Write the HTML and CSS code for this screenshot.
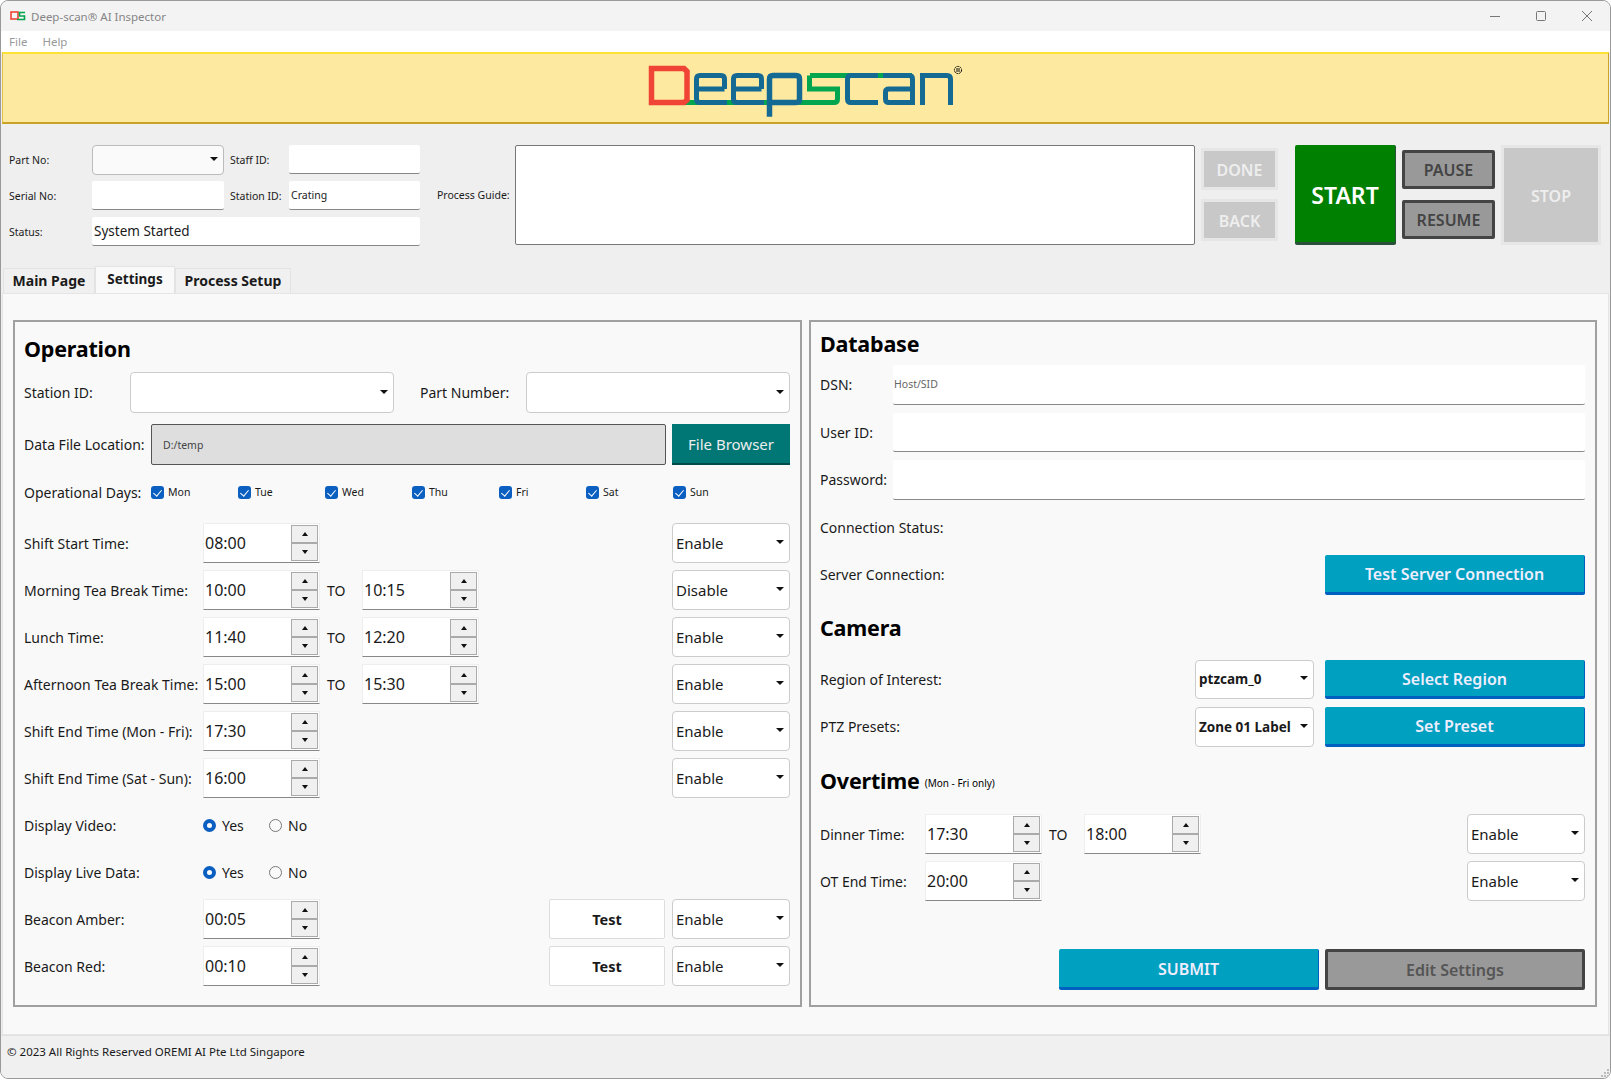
FILE: index.html
```html
<!DOCTYPE html>
<html lang="en">
<head>
    <meta charset="UTF-8">
    <title>Deep-scan AI Inspector</title>
    <link rel="stylesheet" href="styles.css">
</head>
<body>
<div class="window">

    <!-- Title bar -->
    <div class="titlebar">
        <svg class="app-icon" width="16" height="10" viewBox="0 0 16 10">
            <rect x="1" y="1" width="7" height="7" fill="none" stroke="#f04437" stroke-width="1.6"/>
            <path d="M15 1.5H9.5V5H14.5V8.5H7" fill="none" stroke="#04a54f" stroke-width="1.6"/>
        </svg>
        <span class="title-text">Deep-scan® AI Inspector</span>
        <div class="win-controls">
            <svg width="12" height="12" viewBox="0 0 12 12"><path d="M1 6.5H11" stroke="#777" fill="none"/></svg>
            <svg width="12" height="12" viewBox="0 0 12 12"><rect x="1.5" y="1.5" width="9" height="9" rx="1" stroke="#777" fill="none"/></svg>
            <svg width="12" height="12" viewBox="0 0 12 12"><path d="M1 1L11 11M11 1L1 11" stroke="#777" fill="none"/></svg>
        </div>
    </div>

    <!-- Menu -->
    <div class="menubar">
        <span>File</span>
        <span>Help</span>
    </div>

    <!-- Logo banner -->
    <div class="banner">
        <svg class="logo" width="330" height="60" viewBox="0 0 330 60" role="img" aria-label="Deepscan logo">
            <g fill="none" stroke="#04a54f" stroke-width="5">
                <path d="M44 42.5H150"/>
                <path d="M272 15.5H170"/>
                <path d="M169.5 15.5V29H197.5V39Q197.5 42.5 194 42.5H150"/>
            </g>
            <g fill="none" stroke="#156a93" stroke-width="5">
                <path d="M84.5 29V19Q84.5 15.5 81 15.5H60Q56.5 15.5 56.5 19V39Q56.5 42.5 60 42.5H87M56.5 29H84.5"/>
                <path d="M121.5 29V19Q121.5 15.5 118 15.5H97Q93.5 15.5 93.5 19V39Q93.5 42.5 97 42.5H124M93.5 29H121.5"/>
                <path d="M129.5 56.7V19Q129.5 15.5 133 15.5H156Q159.5 15.5 159.5 19V39Q159.5 42.5 156 42.5H129.5" stroke-width="5.5"/>
                <path d="M238 15.5H211Q207.5 15.5 207.5 19V39Q207.5 42.5 211 42.5H238"/>
                <path d="M243 15.5H269Q272.5 15.5 272.5 19V45M272.5 29H249Q245.5 29 245.5 32V39Q245.5 42.5 249 42.5H272.5"/>
                <path d="M282.5 45V15.5H307Q310.5 15.5 310.5 19V45"/>
            </g>
            <path d="M11.5 8.5H44L47 11.5V40L44 42.5H11.5Z" fill="none" stroke="#f04437" stroke-width="5.5"/>
            <circle cx="318" cy="10" r="3.6" fill="none" stroke="#111" stroke-dasharray="2 0.6"/>
            <path d="M317 8V12M319 8V12" stroke="#111"/>
        </svg>
    </div>

    <!-- Top form and big buttons -->
    <div class="topbar">
        <div class="top-form">
            <label>Part No:</label>
            <div class="combo top-combo"><i class="arrow"></i></div>
            <label class="mid-label">Staff ID:</label>
            <div class="line-input"></div>
            <label>Serial No:</label>
            <div class="line-input"></div>
            <label class="mid-label">Station ID:</label>
            <div class="line-input">Crating</div>
            <label>Status:</label>
            <div class="line-input status-input">System Started</div>
        </div>
        <label class="guide-label">Process Guide:</label>
        <div class="guide-box"></div>
        <div class="stack done-stack">
            <button class="btn-disabled">DONE</button>
            <button class="btn-disabled">BACK</button>
        </div>
        <button class="btn-start">START</button>
        <div class="stack pause-stack">
            <button class="btn-dark">PAUSE</button>
            <button class="btn-dark">RESUME</button>
        </div>
        <button class="btn-disabled btn-stop">STOP</button>
    </div>

    <!-- Tabs -->
    <div class="tabs">
        <div class="tab tab-main">Main Page</div>
        <div class="tab tab-active">Settings</div>
        <div class="tab tab-setup">Process Setup</div>
    </div>

    <div class="pane">

        <!-- Operation -->
        <section class="panel">
            <h2 class="op-title">Operation</h2>
            <div class="row row-41">
                <span class="lbl w106">Station ID:</span>
                <div class="combo w264"><i class="arrow"></i></div>
                <span class="lbl w106 part-lbl">Part Number:</span>
                <div class="combo w264"><i class="arrow"></i></div>
            </div>
            <div class="row row-41 data-row">
                <span class="lbl w127">Data File Location:</span>
                <div class="path-field">D:/temp</div>
                <button class="btn-teal">File Browser</button>
            </div>
            <div class="row days-row">
                <span class="lbl w127">Operational Days:</span>
                <span class="day"><i class="check"></i>Mon</span>
                <span class="day"><i class="check"></i>Tue</span>
                <span class="day"><i class="check"></i>Wed</span>
                <span class="day"><i class="check"></i>Thu</span>
                <span class="day"><i class="check"></i>Fri</span>
                <span class="day"><i class="check"></i>Sat</span>
                <span class="day"><i class="check"></i>Sun</span>
            </div>

            <div class="row">
                <span class="lbl w179">Shift Start Time:</span>
                <div class="spin"><span>08:00</span><div class="spin-btns"><b><i class="up"></i></b><b><i class="arrow"></i></b></div></div>
                <div class="combo enable">Enable<i class="arrow"></i></div>
            </div>
            <div class="row">
                <span class="lbl w179">Morning Tea Break Time:</span>
                <div class="spin"><span>10:00</span><div class="spin-btns"><b><i class="up"></i></b><b><i class="arrow"></i></b></div></div>
                <span class="to">TO</span>
                <div class="spin"><span>10:15</span><div class="spin-btns"><b><i class="up"></i></b><b><i class="arrow"></i></b></div></div>
                <div class="combo enable">Disable<i class="arrow"></i></div>
            </div>
            <div class="row">
                <span class="lbl w179">Lunch Time:</span>
                <div class="spin"><span>11:40</span><div class="spin-btns"><b><i class="up"></i></b><b><i class="arrow"></i></b></div></div>
                <span class="to">TO</span>
                <div class="spin"><span>12:20</span><div class="spin-btns"><b><i class="up"></i></b><b><i class="arrow"></i></b></div></div>
                <div class="combo enable">Enable<i class="arrow"></i></div>
            </div>
            <div class="row">
                <span class="lbl w179">Afternoon Tea Break Time:</span>
                <div class="spin"><span>15:00</span><div class="spin-btns"><b><i class="up"></i></b><b><i class="arrow"></i></b></div></div>
                <span class="to">TO</span>
                <div class="spin"><span>15:30</span><div class="spin-btns"><b><i class="up"></i></b><b><i class="arrow"></i></b></div></div>
                <div class="combo enable">Enable<i class="arrow"></i></div>
            </div>
            <div class="row">
                <span class="lbl w179">Shift End Time (Mon - Fri):</span>
                <div class="spin"><span>17:30</span><div class="spin-btns"><b><i class="up"></i></b><b><i class="arrow"></i></b></div></div>
                <div class="combo enable">Enable<i class="arrow"></i></div>
            </div>
            <div class="row">
                <span class="lbl w179">Shift End Time (Sat - Sun):</span>
                <div class="spin"><span>16:00</span><div class="spin-btns"><b><i class="up"></i></b><b><i class="arrow"></i></b></div></div>
                <div class="combo enable">Enable<i class="arrow"></i></div>
            </div>
            <div class="row">
                <span class="lbl w179">Display Video:</span>
                <span class="radio radio-on">Yes</span>
                <span class="radio">No</span>
            </div>
            <div class="row">
                <span class="lbl w179">Display Live Data:</span>
                <span class="radio radio-on">Yes</span>
                <span class="radio">No</span>
            </div>
            <div class="row">
                <span class="lbl w179">Beacon Amber:</span>
                <div class="spin"><span>00:05</span><div class="spin-btns"><b><i class="up"></i></b><b><i class="arrow"></i></b></div></div>
                <button class="btn-test">Test</button>
                <div class="combo enable after-test">Enable<i class="arrow"></i></div>
            </div>
            <div class="row">
                <span class="lbl w179">Beacon Red:</span>
                <div class="spin"><span>00:10</span><div class="spin-btns"><b><i class="up"></i></b><b><i class="arrow"></i></b></div></div>
                <button class="btn-test">Test</button>
                <div class="combo enable after-test">Enable<i class="arrow"></i></div>
            </div>
        </section>

        <!-- Database, Camera, Overtime -->
        <section class="panel">
            <h2 class="db-title">Database</h2>
            <div class="row row-db">
                <span class="lbl w73">DSN:</span>
                <div class="line-input db-input hint">Host/SID</div>
            </div>
            <div class="row row-db">
                <span class="lbl w73">User ID:</span>
                <div class="line-input db-input"></div>
            </div>
            <div class="row row-db">
                <span class="lbl w73">Password:</span>
                <div class="line-input db-input"></div>
            </div>
            <div class="row row-db">
                <span class="lbl">Connection Status:</span>
            </div>
            <div class="row row-db">
                <span class="lbl">Server Connection:</span>
                <button class="btn-blue">Test Server Connection</button>
            </div>

            <h2 class="cam-title">Camera</h2>
            <div class="row row-db">
                <span class="lbl">Region of Interest:</span>
                <div class="combo cam-combo">ptzcam_0<i class="arrow"></i></div>
                <button class="btn-blue btn-near">Select Region</button>
            </div>
            <div class="row row-db">
                <span class="lbl">PTZ Presets:</span>
                <div class="combo cam-combo">Zone 01 Label<i class="arrow"></i></div>
                <button class="btn-blue btn-near">Set Preset</button>
            </div>

            <h2 class="ot-title">Overtime <small>(Mon - Fri only)</small></h2>
            <div class="row">
                <span class="lbl w105">Dinner Time:</span>
                <div class="spin"><span>17:30</span><div class="spin-btns"><b><i class="up"></i></b><b><i class="arrow"></i></b></div></div>
                <span class="to">TO</span>
                <div class="spin"><span>18:00</span><div class="spin-btns"><b><i class="up"></i></b><b><i class="arrow"></i></b></div></div>
                <div class="combo enable">Enable<i class="arrow"></i></div>
            </div>
            <div class="row">
                <span class="lbl w105">OT End Time:</span>
                <div class="spin"><span>20:00</span><div class="spin-btns"><b><i class="up"></i></b><b><i class="arrow"></i></b></div></div>
                <div class="combo enable">Enable<i class="arrow"></i></div>
            </div>

            <div class="submit-row">
                <button class="btn-blue">SUBMIT</button>
                <button class="btn-edit">Edit Settings</button>
            </div>
        </section>
    </div>

    <!-- Status bar -->
    <div class="statusbar">
        <span>© 2023 All Rights Reserved OREMI AI Pte Ltd Singapore</span>
        <svg class="grip" width="8" height="8" viewBox="0 0 8 8">
            <path d="M6 0h2v2H6zM3 3h2v2H3zM6 3h2v2H6zM0 6h2v2H0zM3 6h2v2H3zM6 6h2v2H6z" fill="#bbb"/>
        </svg>
    </div>
</div>
</body>
</html>
```

FILE: styles.css
```css
*, *::before, *::after {
    box-sizing: border-box;
}
body {
    margin: 0;
    height: 1080px;
    overflow: hidden;
    background-color: #fff;
    font-family: "Noto Sans", Arial, sans-serif;
    color: #1a1a1a;
}
button {
    font-family: inherit;
    padding: 0;
    cursor: pointer;
}
.window {
    height: 1079px;
    background-color: #efefef;
    border: 1px solid #999;
    border-radius: 8px;
    overflow: hidden;
    display: flex;
    flex-direction: column;
}

/* Title bar and menu */
.titlebar {
    height: 30px;
    flex: none;
    background-color: #f3f3f3;
    display: flex;
    align-items: center;
    padding-left: 9px;
}
.app-icon {
    margin-right: 5px;
}
.title-text {
    font-size: 11.5px;
    color: #858585;
}
.win-controls {
    margin-left: auto;
    display: flex;
    gap: 34px;
    padding-right: 17px;
}
.menubar {
    height: 21px;
    flex: none;
    background-color: #fff;
    display: flex;
    align-items: center;
    gap: 15px;
    padding-left: 8px;
    font-size: 11.5px;
    color: #999;
}
.banner {
    height: 72px;
    flex: none;
    margin: 0 1px;
    background-color: #fde9a0;
    border-top: 2px solid #ffe135;
    border-bottom: 2px solid #c9a227;
    border-left: 1px solid #e2c04a;
    border-right: 1px solid #c9a227;
    display: flex;
    justify-content: center;
}
.logo {
    margin: 6px 0 0 -2px;
    display: block;
}

/* Top form */
.topbar {
    height: 142px;
    flex: none;
    padding: 21px 0 0 8px;
    display: flex;
    align-items: flex-start;
}
.top-form {
    display: grid;
    grid-template-columns: 83px 132px 65px 131px;
    grid-auto-rows: 29px;
    row-gap: 7px;
    align-items: center;
    font-size: 10.5px;
}
.mid-label {
    padding-left: 6px;
}
.top-form .status-input {
    grid-column: 2 / 5;
    font-size: 13.5px;
}
.line-input {
    height: 100%;
    background-color: #fff;
    border-bottom: 1px solid #888;
    border-radius: 2px;
    display: flex;
    align-items: center;
    padding-left: 2px;
}
.guide-label {
    width: 71px;
    margin: 0 7px 0 17px;
    padding-top: 43px;
    font-size: 10.5px;
    white-space: nowrap;
}
.guide-box {
    width: 680px;
    height: 100px;
    background-color: #fff;
    border: 1px solid #777;
    border-radius: 2px;
}
.stack {
    height: 100px;
    display: flex;
    flex-direction: column;
    justify-content: space-between;
}
.done-stack {
    width: 77px;
    margin-left: 6px;
    padding: 3px 0 4px;
}
.done-stack button {
    height: 42px;
    padding-top: 2px;
}
.pause-stack {
    width: 93px;
    margin-left: 6px;
    padding: 5px 0 6px;
}
.pause-stack button {
    height: 39px;
}
.btn-disabled {
    background-color: #c8c8c8;
    border: 3px solid #e6e6e6;
    color: #eee;
    font-size: 16px;
    font-weight: 600;
}
.btn-start {
    width: 101px;
    height: 100px;
    margin-left: 17px;
    padding-top: 3px;
    background-color: #008000;
    border: none;
    border-bottom: 3px solid #2a4f3a;
    border-right: 1px solid #2a4f3a;
    border-radius: 2px;
    color: #fff;
    font-size: 23px;
    font-weight: 600;
}
.btn-dark {
    background-color: #999;
    border: 3px solid #444;
    border-radius: 2px;
    color: #444;
    font-size: 16px;
    font-weight: 600;
}
.btn-stop {
    width: 100px;
    height: 100px;
    margin-left: 6px;
    padding-top: 2px;
}

/* Tabs */
.tabs {
    height: 27px;
    flex: none;
    padding-left: 2px;
    display: flex;
    align-items: flex-end;
    font-size: 14px;
    font-weight: 700;
}
.tab {
    height: 25px;
    padding-bottom: 1px;
    display: flex;
    align-items: center;
    justify-content: center;
    background-color: #f0f0f0;
    border: 1px solid #e3e3e3;
    border-bottom: none;
}
.tab-main {
    width: 92px;
}
.tab-active {
    width: 80px;
    height: 27px;
    padding-bottom: 3px;
    background-color: #f9f9f9;
    font-size: 13.5px;
}
.tab-setup {
    width: 116px;
}

/* Settings pane */
.pane {
    height: 742px;
    flex: none;
    margin: 0 1px;
    padding: 26px 11px 0 10px;
    background-color: #f9f9f9;
    border: 1px solid #e5e5e5;
    display: flex;
    gap: 7px;
}
.panel {
    flex: 1;
    height: 687px;
    padding: 7px 10px 0 9px;
    border: 2px solid #a0a0a0;
    display: flex;
    flex-direction: column;
}
h2 {
    margin: 0;
    font-size: 21.5px;
    font-weight: 700;
    letter-spacing: -0.2px;
    color: #000;
    display: flex;
    align-items: center;
    flex: none;
}
.op-title {
    height: 43px;
    padding-bottom: 4px;
}
.db-title {
    height: 36px;
    padding-bottom: 7px;
}
.cam-title {
    height: 49px;
    margin-bottom: 8px;
}
.ot-title {
    height: 51.5px;
    margin-bottom: 8px;
}
.ot-title small {
    margin-left: 5px;
    padding-top: 5px;
    font-size: 10px;
    font-weight: 400;
    letter-spacing: 0;
}
.row {
    height: 40px;
    margin-bottom: 7px;
    flex: none;
    display: flex;
    align-items: center;
    font-size: 14px;
}
.row-41 {
    height: 41px;
    margin-bottom: 11px;
}
.data-row {
    margin-bottom: 7px;
}
.days-row {
    margin-bottom: 11px;
}
.row-db {
    height: 39.5px;
    margin-bottom: 8px;
}
.lbl {
    flex: none;
    white-space: nowrap;
}
.w73 { width: 73px; }
.w105 { width: 105px; }
.w106 { width: 106px; }
.w127 { width: 127px; }
.w179 { width: 179px; }
.part-lbl {
    margin-left: 26px;
}

/* Combos */
.combo {
    position: relative;
    height: 100%;
    background-color: #fff;
    border: 1px solid #ccc;
    border-radius: 4px;
    display: flex;
    align-items: center;
    padding-left: 3px;
    font-size: 15px;
    flex: none;
}
.top-combo {
    height: 30px;
    background-color: #fafafa;
    border-color: #bbb;
}
.w264 {
    width: 264px;
}
.enable {
    width: 118px;
    margin-left: auto;
}
.after-test {
    margin-left: 7px;
}
.cam-combo {
    width: 119px;
    margin-left: auto;
    font-size: 13.5px;
    font-weight: 700;
    white-space: nowrap;
}
.arrow {
    border-left: 4px solid transparent;
    border-right: 4px solid transparent;
    border-top: 4px solid #111;
}
.up {
    border-left: 3px solid transparent;
    border-right: 3px solid transparent;
    border-bottom: 4px solid #111;
}
.combo .arrow {
    position: absolute;
    right: 5px;
    top: 50%;
    margin-top: -3px;
}

/* Spin boxes */
.spin {
    width: 117px;
    height: 40px;
    flex: none;
    background-color: #fff;
    border-top: 1px solid #eee;
    border-left: 1px solid #eee;
    border-right: 1px solid #eee;
    border-bottom: 1px solid #888;
    padding: 0 1px 0 1px;
    display: flex;
    align-items: center;
    justify-content: space-between;
    font-size: 16px;
}
.spin-btns {
    width: 27px;
    display: flex;
    flex-direction: column;
}
.spin-btns b {
    height: 18px;
    background-color: #f0f0f0;
    border: 1px solid #aaa;
    display: flex;
    align-items: center;
    justify-content: center;
}
.spin-btns .arrow {
    border-left-width: 3px;
    border-right-width: 3px;
}
.to {
    width: 42px;
    padding-left: 7px;
    flex: none;
}

/* Data file row */
.path-field {
    width: 515px;
    height: 100%;
    background-color: #dedede;
    border: 1px solid #555;
    border-radius: 2px;
    display: flex;
    align-items: center;
    padding-left: 11px;
    font-size: 10.5px;
    color: #444;
    flex: none;
}
.btn-teal {
    width: 118px;
    height: 100%;
    margin-left: 6px;
    flex: none;
    background-color: #007675;
    border: none;
    border-bottom: 2px solid #004a4a;
    color: #eee;
    font-size: 15px;
}

/* Days */
.day {
    width: 87px;
    flex: none;
    display: flex;
    align-items: center;
    font-size: 10.5px;
}
.check {
    width: 13px;
    height: 13px;
    margin-right: 4px;
    background-color: #0a5fc0;
    border-radius: 3px;
    position: relative;
}
.check::after {
    content: "";
    position: absolute;
    left: 4px;
    top: 2px;
    width: 5px;
    height: 8px;
    border-right: 1px solid #fff;
    border-bottom: 1px solid #fff;
    transform: rotate(40deg);
}

/* Radios */
.radio {
    width: 66px;
    flex: none;
    display: flex;
    align-items: center;
}
.radio::before {
    content: "";
    width: 13px;
    height: 13px;
    margin-right: 6px;
    border: 1px solid #777;
    border-radius: 50%;
    background-color: #fafafa;
}
.radio-on::before {
    border: 4px solid #0a5fc0;
    background-color: #fff;
}

/* Buttons */
.btn-test {
    width: 116px;
    height: 100%;
    margin-left: auto;
    background-color: #fff;
    border: 1px solid #ddd;
    border-radius: 2px;
    font-size: 14.5px;
    font-weight: 700;
    color: #1a1a1a;
}
.btn-blue {
    width: 260px;
    height: 100%;
    margin-left: auto;
    padding-top: 2px;
    flex: none;
    background-color: #00a0c0;
    border: none;
    border-right: 1px solid #0060c0;
    border-bottom: 3px solid #0060c0;
    border-radius: 2px;
    color: #eef;
    font-size: 16px;
    font-weight: 600;
}
.btn-near {
    margin-left: 11px;
}
.btn-edit {
    width: 260px;
    height: 100%;
    flex: none;
    background-color: #999;
    border: 3px solid #444;
    border-radius: 2px;
    color: #555;
    font-size: 16px;
    font-weight: 600;
}
.submit-row {
    height: 41px;
    margin-top: 41px;
    flex: none;
    display: flex;
    justify-content: flex-end;
    gap: 6px;
}
.submit-row .btn-blue {
    margin-left: 0;
}
.db-input {
    flex: 1;
}
.hint {
    font-size: 10.5px;
    color: #666;
    padding-left: 1px;
}

/* Status bar */
.statusbar {
    flex: 1;
    background-color: #f0f0f0;
    border-top: 1px solid #e2e2e2;
    padding: 8px 1px 1px 6px;
    font-size: 11.5px;
    display: flex;
    justify-content: space-between;
}
.grip {
    align-self: flex-end;
}
```
